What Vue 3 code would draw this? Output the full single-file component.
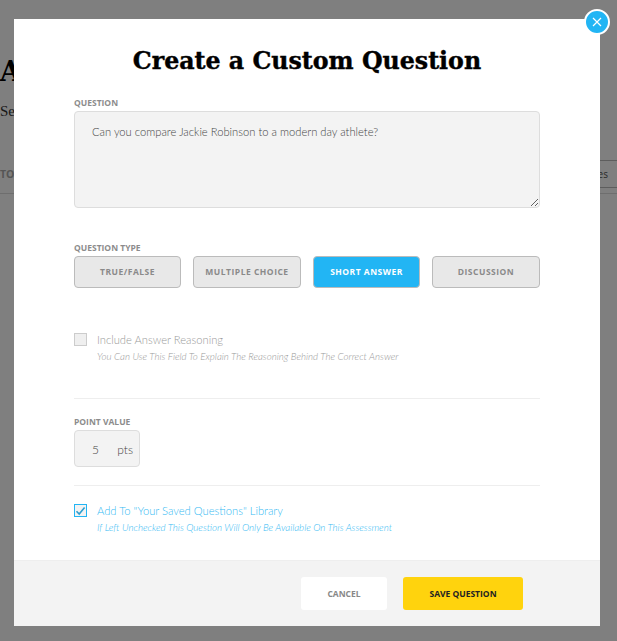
<script setup>
import { ref } from 'vue'
const question = ref('Can you compare Jackie Robinson to a modern day athlete?')
const types = ['True/False', 'Multiple Choice', 'Short Answer', 'Discussion']
const selected = ref('Short Answer')
</script>

<template>
  <div class="page">
    <div class="behind">
      <h1 class="bg-title">A</h1>
      <p class="bg-sub">Sel</p>
      <div class="bg-tabs">
        <span class="bg-tab">TOP</span>
        <span class="bg-box">es</span>
      </div>
    </div>
    <div class="overlay"></div>
    <div class="modal">
      <button class="close" aria-label="Close">
        <svg width="10" height="10" viewBox="0 0 10 10"><path d="M1 1 L9 9 M9 1 L1 9" stroke="#fff" stroke-width="1.2" fill="none"/></svg>
      </button>
      <div class="body">
        <h2 class="title">Create a Custom Question</h2>
        <label class="field-label first">Question</label>
        <textarea class="question" v-model="question"></textarea>

        <label class="field-label type-label">Question Type</label>
        <div class="types">
          <button v-for="t in types" :key="t" class="type" :class="{ active: t === selected }" @click="selected = t">{{ t }}</button>
        </div>

        <div class="check-row reasoning">
          <span class="box"></span>
          <div>
            <div class="check-title">Include Answer Reasoning</div>
            <div class="check-hint">You Can Use This Field To Explain The Reasoning Behind The Correct Answer</div>
          </div>
        </div>

        <hr class="rule rule-one" />

        <label class="field-label">Point Value</label>
        <div class="points"><span class="num">5</span><span class="pts">pts</span></div>

        <hr class="rule rule-two" />

        <div class="check-row saved">
          <span class="box on">
            <svg width="11" height="10" viewBox="0 0 11 10"><path d="M1.5 5.2 L4.2 8 L9.6 1.4" stroke="#2d9fd0" stroke-width="1.6" fill="none"/></svg>
          </span>
          <div>
            <div class="check-title">Add To "Your Saved Questions" Library</div>
            <div class="check-hint">If Left Unchecked This Question Will Only Be Available On This Assessment</div>
          </div>
        </div>
      </div>
      <div class="footer">
        <button class="cancel">Cancel</button>
        <button class="save">Save Question</button>
      </div>
    </div>
  </div>
</template>

<style>
html, body { margin: 0; padding: 0; overflow: hidden; }
</style>

<style scoped>
.page {
  position: relative;
  width: 617px;
  height: 641px;
  overflow: hidden;
  background: #fff;
  font-family: "Open Sans", sans-serif;
}
.behind { padding-top: 57px; }
.bg-title {
  margin: 0;
  font: bold 27px/30px "DejaVu Serif", serif;
  color: #000;
  white-space: nowrap;
}
.bg-sub {
  margin: 14px 0 0;
  font: 15px/20px "Liberation Serif", serif;
  color: #333;
}
.bg-tabs {
  margin-top: 39px;
  height: 34px;
  box-sizing: border-box;
  display: flex;
  align-items: flex-start;
  justify-content: space-between;
  border-bottom: 1px solid #ddd;
  color: #aaa;
}
.bg-tab { font-size: 10.5px; line-height: 28px; font-weight: 700; }
.bg-box {
  width: 72px;
  height: 28px;
  box-sizing: border-box;
  border: 1px solid #bbb;
  font-size: 10px;
  line-height: 26px;
  text-align: right;
  padding-right: 9px;
  margin-right: -1px;
  white-space: nowrap;
  overflow: hidden;
  color: #555;
}
.overlay { position: absolute; inset: 0; background: rgba(0, 0, 0, 0.5); }
.modal {
  position: absolute;
  left: 14px;
  top: 19px;
  width: 586px;
  height: 607px;
  background: #fff;
  display: flex;
  flex-direction: column;
}
.close {
  position: absolute;
  right: -10px;
  top: -10px;
  width: 26px;
  height: 26px;
  box-sizing: border-box;
  padding: 0;
  border: 2px solid #fff;
  border-radius: 50%;
  background: #22b5f4;
  display: flex;
  align-items: center;
  justify-content: center;
}
.body { flex: 1; padding: 0 60px; }
.title {
  margin: 0;
  padding-top: 27px;
  font: bold 23.7px/30px "DejaVu Serif", serif;
  -webkit-text-stroke: 0.4px #000;
  color: #000;
  text-align: center;
  white-space: nowrap;
}
.field-label {
  display: block;
  font-size: 8.5px;
  line-height: 12px;
  font-weight: 700;
  text-transform: uppercase;
  color: #8c8c8c;
}
.first { margin-top: 21px; }
.question {
  display: block;
  box-sizing: border-box;
  width: 466px;
  height: 97px;
  margin-top: 2px;
  padding: 12px 17px;
  background: #f3f3f3;
  border: 1px solid #ddd;
  border-radius: 4px;
  outline: none;
  font-family: Lato, sans-serif;
  font-size: 11.2px;
  font-weight: 300;
  line-height: 16px;
  color: #444;
}
.type-label { margin-top: 34px; }
.types {
  display: grid;
  grid-template-columns: 107px 108px 107px 108px;
  column-gap: 12px;
  margin-top: 2px;
}
.type {
  height: 32px;
  padding: 0 0 2px;
  box-sizing: border-box;
  background: #e8e8e8;
  border: 1px solid #bbb;
  border-radius: 4px;
  font-family: "Open Sans", sans-serif;
  font-size: 8.5px;
  font-weight: 700;
  letter-spacing: 0.5px;
  text-transform: uppercase;
  color: #8a8a8a;
}
.type.active { background: #22b5f4; border-color: #bbb; color: #fff; }
.check-row { display: flex; gap: 10px; }
.reasoning { margin-top: 45px; color: #999; }
.saved { margin-top: 18px; color: #35baf3; }
.box {
  flex: none;
  width: 13px;
  height: 13px;
  box-sizing: border-box;
  border: 1px solid #ccc;
  background: #efefef;
  display: flex;
  align-items: center;
  justify-content: center;
}
.box.on { border: 1px solid #22b5f4; background: #f3f3f3; }
.check-title { font-family: Lato, sans-serif; font-size: 11.2px; line-height: 14px; font-weight: 300; white-space: nowrap; }
.check-hint { font-family: Lato, sans-serif; font-size: 9.75px; line-height: 12px; font-style: italic; font-weight: 300; margin-top: 3px; white-space: nowrap; }
.rule { border: 0; border-top: 1px solid #eee; margin: 0; }
.rule-one { margin-top: 36px; margin-bottom: 17px; }
.rule-two { margin-top: 18px; }
.points {
  box-sizing: border-box;
  width: 66px;
  height: 37px;
  margin-top: 2px;
  background: #f3f3f3;
  border: 1px solid #ddd;
  border-radius: 4px;
  display: flex;
  align-items: center;
  justify-content: space-between;
  padding: 2px 6px 0 17px;
  font-family: Lato, sans-serif;
  font-size: 12px;
  font-weight: 300;
  color: #444;
}
.footer {
  height: 66px;
  box-sizing: border-box;
  background: #f3f3f3;
  border-top: 1px solid #eee;
  display: flex;
  align-items: flex-start;
  padding: 16px 0 0 287px;
  gap: 16px;
}
.footer button {
  height: 33px;
  padding: 0;
  border: 0;
  border-radius: 3px;
  font-family: "Open Sans", sans-serif;
  font-size: 8.5px;
  font-weight: 700;
  text-transform: uppercase;
}
.cancel { width: 86px; background: #fff; color: #888; }
.save { width: 120px; background: #ffd30d; color: #222; }
</style>
